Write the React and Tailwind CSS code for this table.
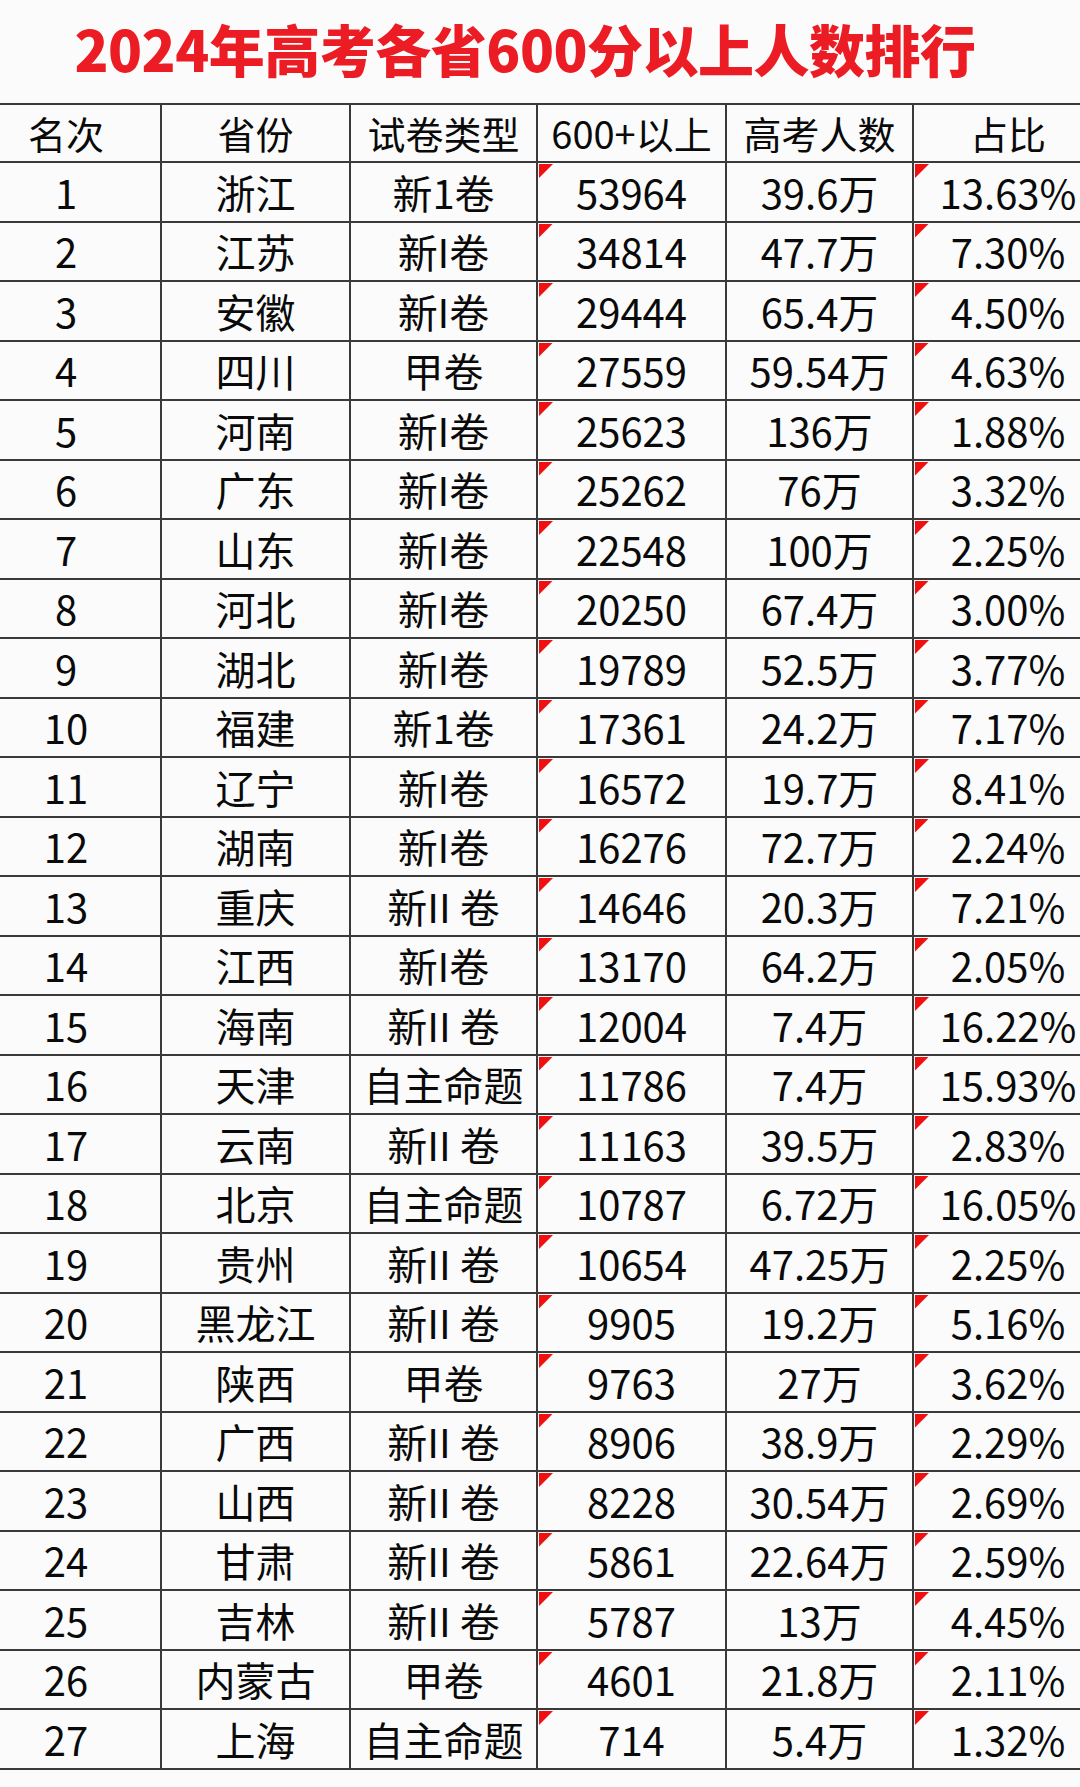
import React from "react";

const rows = [
  ["1", "浙江", "新1卷", "53964", "39.6万", "13.63%"],
  ["2", "江苏", "新I卷", "34814", "47.7万", "7.30%"],
  ["3", "安徽", "新I卷", "29444", "65.4万", "4.50%"],
  ["4", "四川", "甲卷", "27559", "59.54万", "4.63%"],
  ["5", "河南", "新I卷", "25623", "136万", "1.88%"],
  ["6", "广东", "新I卷", "25262", "76万", "3.32%"],
  ["7", "山东", "新I卷", "22548", "100万", "2.25%"],
  ["8", "河北", "新I卷", "20250", "67.4万", "3.00%"],
  ["9", "湖北", "新I卷", "19789", "52.5万", "3.77%"],
  ["10", "福建", "新1卷", "17361", "24.2万", "7.17%"],
  ["11", "辽宁", "新I卷", "16572", "19.7万", "8.41%"],
  ["12", "湖南", "新I卷", "16276", "72.7万", "2.24%"],
  ["13", "重庆", "新II 卷", "14646", "20.3万", "7.21%"],
  ["14", "江西", "新I卷", "13170", "64.2万", "2.05%"],
  ["15", "海南", "新II 卷", "12004", "7.4万", "16.22%"],
  ["16", "天津", "自主命题", "11786", "7.4万", "15.93%"],
  ["17", "云南", "新II 卷", "11163", "39.5万", "2.83%"],
  ["18", "北京", "自主命题", "10787", "6.72万", "16.05%"],
  ["19", "贵州", "新II 卷", "10654", "47.25万", "2.25%"],
  ["20", "黑龙江", "新II 卷", "9905", "19.2万", "5.16%"],
  ["21", "陕西", "甲卷", "9763", "27万", "3.62%"],
  ["22", "广西", "新II 卷", "8906", "38.9万", "2.29%"],
  ["23", "山西", "新II 卷", "8228", "30.54万", "2.69%"],
  ["24", "甘肃", "新II 卷", "5861", "22.64万", "2.59%"],
  ["25", "吉林", "新II 卷", "5787", "13万", "4.45%"],
  ["26", "内蒙古", "甲卷", "4601", "21.8万", "2.11%"],
  ["27", "上海", "自主命题", "714", "5.4万", "1.32%"],
];

const headers = ["名次", "省份", "试卷类型", "600+以上", "高考人数", "占比"];
// first column starts off-screen on the left, last one runs past the right edge
const widths = ["w-[190px]", "w-[189px]", "w-[187px]", "w-[189px]", "w-[187px]", "w-[190px]"];

function Flag() {
  return <span className="absolute left-[1px] top-[1px] w-[14px] h-[14px] bg-[#f01010] [clip-path:polygon(0_0,100%_0,0_100%)]" />;
}

export default function App() {
  return (
    <div className="w-[1080px] h-[1787px] overflow-hidden bg-[#fbfbfb] font-['Noto_Sans_CJK_SC','Noto_Sans',sans-serif] text-[#0a0a0a]">
      <div className="h-[103px] flex items-center justify-center pr-[30px] pb-[8px]">
        <h1 className="text-[56px] leading-none font-black text-[#ec1c24] tracking-[-0.5px]">2024年高考各省600分以上人数排行</h1>
      </div>
      <table className="border-collapse ml-[-30px] table-fixed w-[1132px]">
        <thead>
          <tr className="h-[58px]">
            {headers.map((h, i) => (
              <th key={h} className={`${widths[i]} border-2 border-[#3a3a3a] text-[38px] font-normal leading-none text-center whitespace-nowrap`}>{h}</th>
            ))}
          </tr>
        </thead>
        <tbody>
          {rows.map((r) => (
            <tr key={r[0]} className="h-[59.5px]">
              {r.map((c, i) => (
                <td key={i} className="relative border-2 border-[#3a3a3a] text-[40px] font-normal leading-none text-center whitespace-pre p-0">
                  {(i === 3 || i === 5) && <Flag />}
                  {c}
                </td>
              ))}
            </tr>
          ))}
        </tbody>
      </table>
    </div>
  );
}
